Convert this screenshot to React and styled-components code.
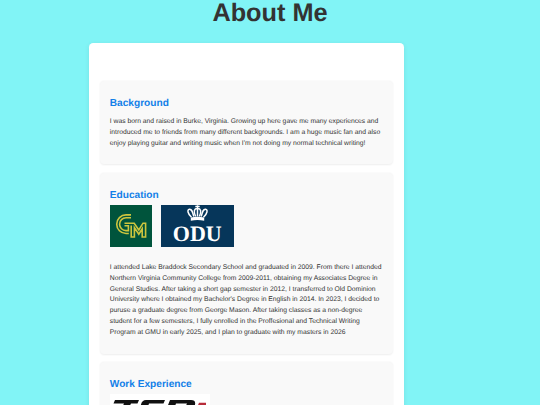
import React from 'react'
import styled, { createGlobalStyle } from 'styled-components'

const GlobalStyle = createGlobalStyle`
  * {
    box-sizing: border-box;
  }

  body {
    margin: 0;
    background: #81f4f6;
    color: #333;
    font-family: "Liberation Sans", Arial, sans-serif;
    font-size: 6.75px;
    line-height: 1.6;
    text-rendering: geometricPrecision;
  }
`

const GmuLogo = () => (
  <svg width="42" height="42" viewBox="0 0 42 42" role="img" aria-label="George Mason">
    <rect width="42" height="42" fill="#00543c" />
    <g fill="none" stroke="#cdc53e" strokeWidth="1.6">
      <path d="M21 9.9H16A9.3 9.3 0 0 0 16 28.5H18.8" />
      <path d="M21 12.8H16A6.4 6.4 0 0 0 16 25.6H18.4V20.8H14.5" />
      <path d="M14.5 18.2H24.2L28.8 25L33 18.2H35.6V32H32.2V23.8L28.8 29.2L24.4 22.6V32H21.2V20.6" />
    </g>
  </svg>
)

const OduLogo = () => (
  <OduBadge>
    <svg width="21" height="16" viewBox="0 0 21 16" aria-hidden="true">
      <g fill="none" stroke="#fff" strokeWidth="1.5">
        <path d="M4.5 12.3C.5 8.5 0 4.7 2.4 4.3C4.9 4 5.6 7 6.8 11.5" />
        <path d="M16.5 12.3C20.5 8.5 21 4.7 18.6 4.3C16.1 4 15.4 7 14.2 11.5" />
        <path d="M8.6 11.5C6.2 6 7.2 3.6 10.5 3.6S14.8 6 12.4 11.5M10.5 .2V11.5M8.3 1.6H12.7" />
      </g>
      <path d="M3.8 12.5Q10.5 11 17.2 12.5V15.7Q10.5 14.3 3.8 15.7Z" fill="#fff" />
    </svg>
    <span>ODU</span>
  </OduBadge>
)

const TsrLogo = () => (
  <svg width="100" height="40" viewBox="0 0 100 40" role="img" aria-label="TSR">
    <rect width="100" height="40" fill="#fff" />
    <path d="M5 6H29L27.5 9.5H21L14 24H7L14 9.5H3.5Z" fill="#111" />
    <path d="M36 6H55L53.5 9.5H39L38 12.5H53L48 24H27L29 19.5H43L44 16.5H32Q30 15 31 10.5Q32 6 36 6Z" fill="#111" />
    <path fillRule="evenodd" d="M60 6H81Q86 6 85 10.5Q84 16 79 17L82 24H74L70 17H64L61 24H53ZM66 9.5L64.5 13.5H75L77 9.5Z" fill="#111" />
    <path d="M89 8.7H96V24H83Z" fill="#b72c3a" />
  </svg>
)

function App() {
  return (
    <Page>
      <GlobalStyle />
      <PageTitle>About Me</PageTitle>
      <Container>
        <Section>
          <SectionTitle>Background</SectionTitle>
          <Text>
            I was born and raised in Burke, Virginia. Growing up here gave me many experiences and<br />
            introduced me to friends from many different backgrounds. I am a huge music fan and also<br />
            enjoy playing guitar and writing music when I'm not doing my normal technical writing!
          </Text>
        </Section>

        <Section>
          <SectionTitle>Education</SectionTitle>
          <LogoRow>
            <GmuLogo />
            <OduLogo />
          </LogoRow>
          <Text $gap="16px">
            I attended Lake Braddock Secondary School and graduated in 2009. From there I attended<br />
            Northern Virginia Community College from 2009-2011, obtaining my Associates Degree in<br />
            General Studies. After taking a short gap semester in 2012, I transferred to Old Dominion<br />
            University where I obtained my Bachelor's Degree in English in 2014. In 2023, I decided to<br />
            puruse a graduate degree from George Mason. After taking classes as a non-degree<br />
            student for a few semesters, I fully enrolled in the Proffesional and Technical Writing<br />
            Program at GMU in early 2025, and I plan to graduate with my masters in 2026
          </Text>
        </Section>

        <Section>
          <SectionTitle>Work Experience</SectionTitle>
          <LogoRow>
            <TsrLogo />
          </LogoRow>
        </Section>
      </Container>
    </Page>
  )
}

const Page = styled.div`
  height: 405px;
  overflow: hidden;
`

const PageTitle = styled.h1`
  margin: 0 0 16.3px;
  font-size: 25.3px;
  line-height: 27px;
  text-align: center;
`

const Container = styled.main`
  width: 315.6px;
  margin-left: 88.6px;
  padding: 37.4px 11px;
  background: #fff;
  border-radius: 4.2px;
  box-shadow: 0 1.7px 5px rgba(0, 0, 0, 0.08);
`

const Section = styled.section`
  margin-bottom: 8.5px;
  padding: 15px 10.2px 14.9px;
  background: #f9f9f9;
  border-radius: 4.2px;
  box-shadow: 0 0.8px 2px rgba(0, 0, 0, 0.07);
`

const SectionTitle = styled.h2`
  margin: 0;
  color: #1380e8;
  font-size: 10.13px;
  line-height: 16.2px;
`

const Text = styled.p`
  margin: ${({ $gap }) => $gap || '5.2px'} 0 0;
  white-space: nowrap;
`

const LogoRow = styled.div`
  display: flex;
  gap: 9px;
  margin-top: 1px;

  svg {
    display: block;
  }
`

const OduBadge = styled.div`
  display: flex;
  flex-direction: column;
  align-items: center;
  width: 73px;
  height: 42px;
  background: #06365a;
  color: #fff;

  span {
    margin-top: 2px;
    font-family: "Liberation Serif", "Times New Roman", serif;
    font-size: 22px;
    font-weight: 700;
    line-height: 22px;
  }
`

export default App
